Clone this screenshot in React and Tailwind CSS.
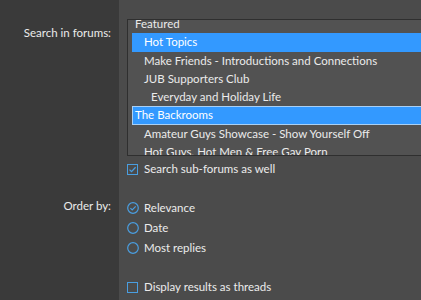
import React from "react";

const font = { fontFamily: 'Lato, "Noto Sans", sans-serif' };

function CheckBox({ checked }) {
  return (
    <svg width="11" height="11" viewBox="0 0 11 11" className="shrink-0">
      <rect x="0.5" y="0.5" width="10" height="10" fill="none" stroke="#4a9ee0" strokeWidth="1" />
      {checked && <path d="M2.5 5.6 L4.5 7.6 L8.6 3.2" fill="none" stroke="#4a9ee0" strokeWidth="1.3" />}
    </svg>
  );
}

function Radio({ checked }) {
  return (
    <svg width="12" height="12" viewBox="0 0 12 12" className="shrink-0">
      <circle cx="6" cy="6" r="5.3" fill="none" stroke="#4a9ee0" strokeWidth="1.2" />
      {checked && <path d="M3.4 6.1 L5.2 7.9 L8.7 4.3" fill="none" stroke="#4a9ee0" strokeWidth="1.2" />}
    </svg>
  );
}

const rows = [
  { t: "Featured", pad: "pl-[3px]" },
  { t: "Hot Topics", pad: "pl-[12px]", sel: true },
  { t: "Make Friends - Introductions and Connections", pad: "pl-[12px]" },
  { t: "JUB Supporters Club", pad: "pl-[12px]" },
  { t: "Everyday and Holiday Life", pad: "pl-[19px]" },
  { t: "The Backrooms", pad: "pl-[3px]", sel: true, focus: true },
  { t: "Amateur Guys Showcase - Show Yourself Off", pad: "pl-[12px]" },
  { t: "Hot Guys, Hot Men & Free Gay Porn", pad: "pl-[12px]" },
];

export default function App() {
  return (
    <div className="w-[421px] h-[300px] overflow-hidden flex text-[11.5px] text-[#ebebeb]" style={font}>
      <div className="w-[119px] shrink-0 bg-[#3a3a3a] flex flex-col items-end pr-[8px]">
        <div className="mt-[24px] h-[18px] leading-[18px]">Search in forums:</div>
        <div className="mt-[155px] h-[18px] leading-[18px]">Order by:</div>
      </div>
      <div className="flex-1 bg-[#4b4b4b] pl-[8px] pt-[19px] flex flex-col">
        <div className="w-[320px] h-[137px] border border-[#2f2f2f] bg-[#525252] overflow-hidden">
          <div className="mt-[-5px] pl-[4px] flex flex-col">
            {rows.map((r) => (
              <div
                key={r.t}
                className={
                  "h-[18.25px] leading-[18px] whitespace-nowrap " +
                  r.pad +
                  (r.sel ? " bg-[#3399ff] text-white" : "") +
                  (r.focus ? " outline outline-1 outline-[#a9d0f5] -outline-offset-1" : "")
                }
              >
                {r.t}
              </div>
            ))}
          </div>
        </div>
        <div className="mt-[6px] h-[14px] flex items-center gap-[6px]">
          <CheckBox checked />
          <span>Search sub-forums as well</span>
        </div>
        <div className="mt-[25px] flex flex-col gap-[6px]">
          {["Relevance", "Date", "Most replies"].map((t, i) => (
            <div key={t} className="h-[14px] flex items-center gap-[5px]">
              <Radio checked={i === 0} />
              <span>{t}</span>
            </div>
          ))}
        </div>
        <div className="mt-[25px] h-[14px] flex items-center gap-[6px]">
          <CheckBox />
          <span>Display results as threads</span>
        </div>
      </div>
    </div>
  );
}
